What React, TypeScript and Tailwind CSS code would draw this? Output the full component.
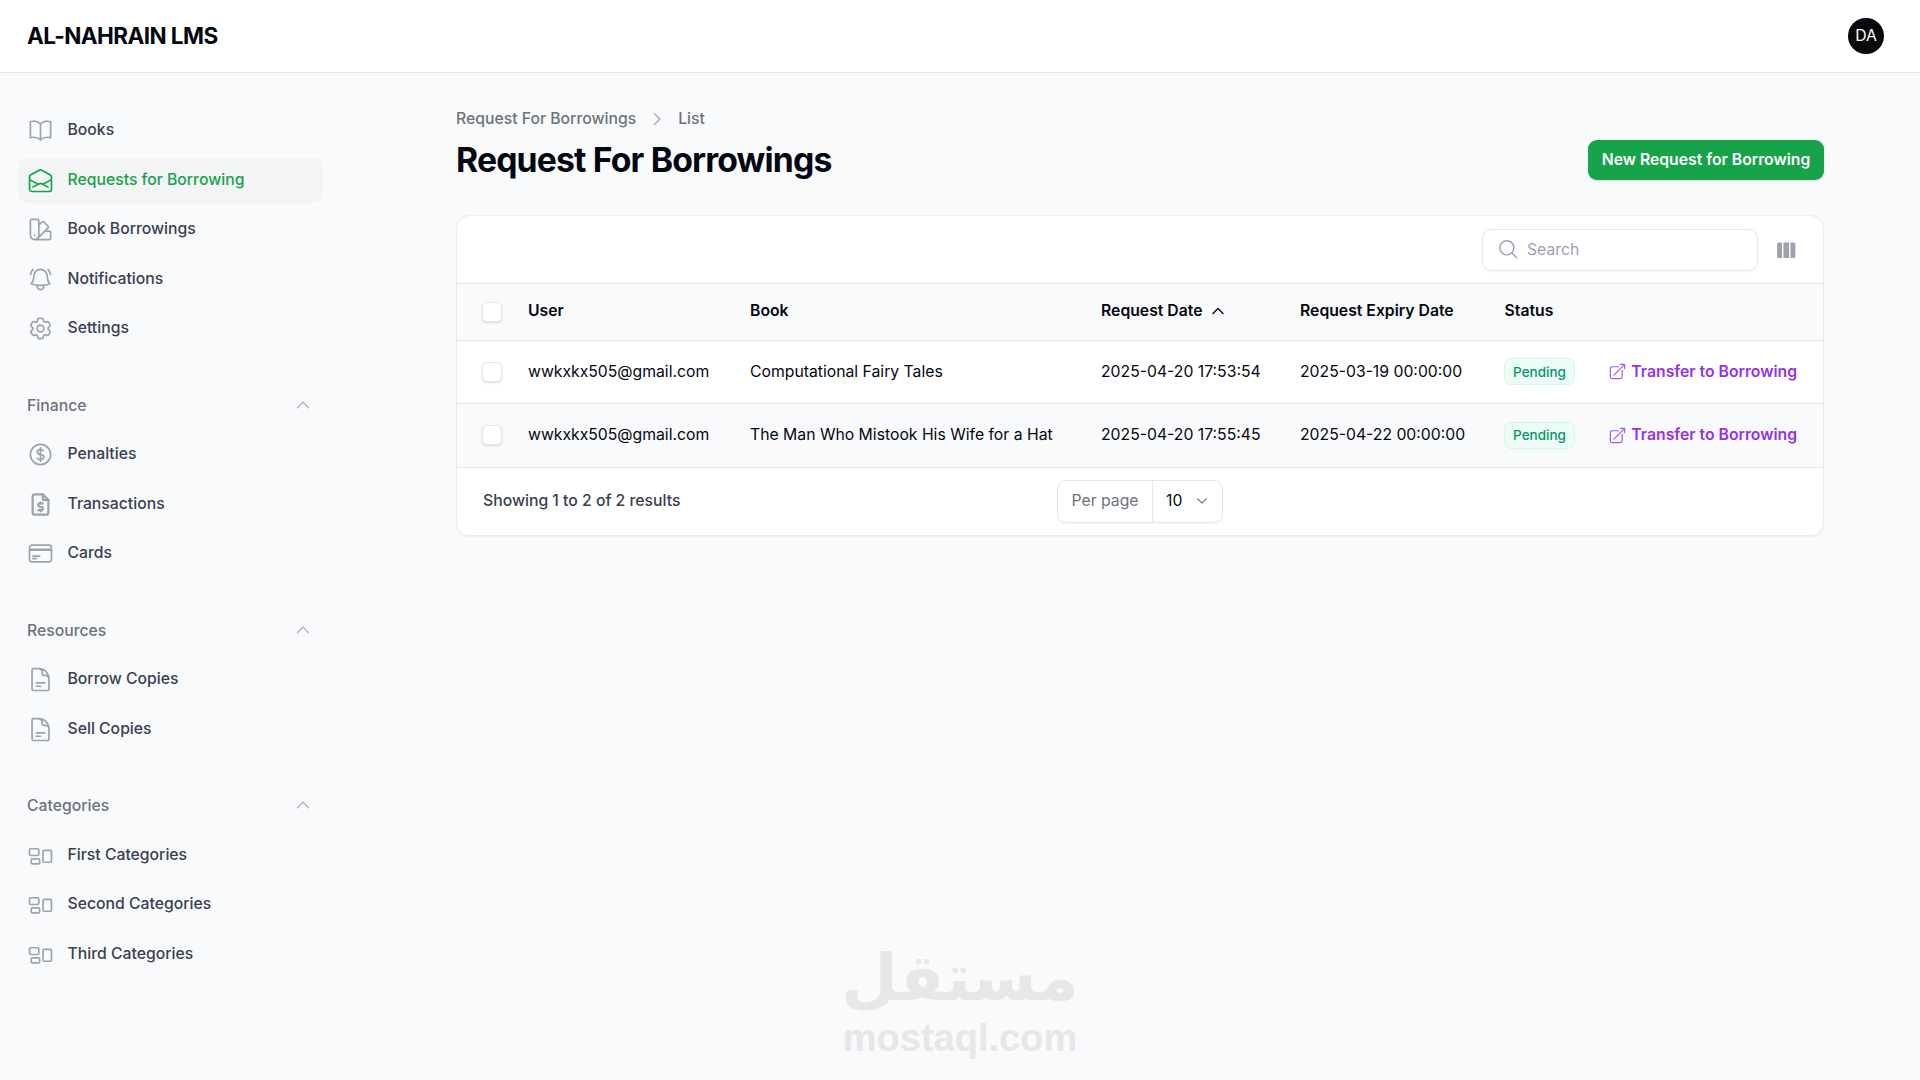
import React from 'react';
import {
    HiOutlineArrowTopRightOnSquare,
    HiOutlineBellAlert,
    HiOutlineBookOpen,
    HiOutlineChevronDown,
    HiOutlineChevronRight,
    HiOutlineChevronUp,
    HiOutlineCog6Tooth,
    HiOutlineCreditCard,
    HiOutlineCurrencyDollar,
    HiOutlineDocumentText,
    HiOutlineEnvelopeOpen,
    HiOutlineMagnifyingGlass,
    HiOutlineRectangleGroup,
    HiOutlineSwatch,
    HiViewColumns,
} from 'react-icons/hi2';
import { TbFileDollar } from 'react-icons/tb';

type NavEntry = { label: string; icon: React.ComponentType<{ className?: string }>; active?: boolean };

const mainNav: NavEntry[] = [
    { label: 'Books', icon: HiOutlineBookOpen },
    { label: 'Requests for Borrowing', icon: HiOutlineEnvelopeOpen, active: true },
    { label: 'Book Borrowings', icon: HiOutlineSwatch },
    { label: 'Notifications', icon: HiOutlineBellAlert },
    { label: 'Settings', icon: HiOutlineCog6Tooth },
];

const groups: { title: string; items: NavEntry[] }[] = [
    {
        title: 'Finance',
        items: [
            { label: 'Penalties', icon: HiOutlineCurrencyDollar },
            { label: 'Transactions', icon: TbFileDollar },
            { label: 'Cards', icon: HiOutlineCreditCard },
        ],
    },
    {
        title: 'Resources',
        items: [
            { label: 'Borrow Copies', icon: HiOutlineDocumentText },
            { label: 'Sell Copies', icon: HiOutlineDocumentText },
        ],
    },
    {
        title: 'Categories',
        items: [
            { label: 'First Categories', icon: HiOutlineRectangleGroup },
            { label: 'Second Categories', icon: HiOutlineRectangleGroup },
            { label: 'Third Categories', icon: HiOutlineRectangleGroup },
        ],
    },
];

const rows = [
    { user: 'wwkxkx505@gmail.com', book: 'Computational Fairy Tales', date: '2025-04-20 17:53:54', expiry: '2025-03-19 00:00:00' },
    { user: 'wwkxkx505@gmail.com', book: 'The Man Who Mistook His Wife for a Hat', date: '2025-04-20 17:55:45', expiry: '2025-04-22 00:00:00', hover: true },
];

const NavItem: React.FC<NavEntry> = ({ label, icon: Icon, active }) => (
    <a className={`flex h-[45px] items-center gap-[13.5px] rounded-[9px] px-[9px] ${active ? 'bg-[#f3f4f6]' : ''}`}>
        <Icon className={`h-[27px] w-[27px] shrink-0 ${active ? 'text-[#16a34a]' : 'text-[#9ca3af]'}`} />
        <span className={`text-[15.75px] leading-[22.5px] font-medium ${active ? 'text-[#16a34a]' : 'text-[#374151]'}`}>{label}</span>
    </a>
);

const Checkbox = () => <span className="block h-[20px] w-[20px] rounded-[5px] border border-[#e5e7eb] bg-white shadow-sm" />;

const App: React.FC = () => {
    return (
        <div className="relative flex min-h-[1080px] flex-col overflow-hidden bg-[#f9fafb] font-['Inter',sans-serif] text-[#030712]">
            <header className="flex h-[73px] items-center justify-between border-b border-[#e5e7eb] bg-white pr-[36px] pl-[27px]">
                <span className="text-[22.5px] leading-[28px] font-bold tracking-tight">AL-NAHRAIN LMS</span>
                <span className="flex h-[36px] w-[36px] items-center justify-center rounded-full bg-[#09090b] text-[15.75px] text-white">DA</span>
            </header>

            <div className="flex flex-1">
                <aside className="w-[360px] shrink-0 pt-[35px] pr-[37px] pl-[18px]">
                    <nav className="flex flex-col gap-[33px]">
                        <div className="flex flex-col gap-[4.5px]">
                            {mainNav.map(item => <NavItem key={item.label} {...item} />)}
                        </div>
                        {groups.map(group => (
                            <div key={group.title} className="flex flex-col gap-[4.5px]">
                                <div className="flex h-[43.5px] items-center justify-between pr-[11px] pl-[9px]">
                                    <span className="text-[15.75px] leading-[22.5px] font-medium text-[#6b7280]">{group.title}</span>
                                    <HiOutlineChevronUp className="mb-[2px] h-[18px] w-[18px] text-[#9ca3af]" />
                                </div>
                                {group.items.map(item => <NavItem key={item.label} {...item} />)}
                            </div>
                        ))}
                    </nav>
                </aside>

                <main className="flex-1 pt-[35px] pr-[96px] pb-[36px] pl-[96px]">
                    <div className="flex items-center justify-between">
                        <div>
                            <div className="flex items-center gap-[9px] text-[15.75px] leading-[22.5px] font-medium text-[#6b7280]">
                                <span>Request For Borrowings</span>
                                <HiOutlineChevronRight className="mx-[3px] h-[18px] w-[18px] text-[#9ca3af]" />
                                <span>List</span>
                            </div>
                            <h1 className="mt-[9px] text-[33.75px] leading-[40.5px] font-bold tracking-tight">Request For Borrowings</h1>
                        </div>
                        <button className="mt-[31px] flex h-[40px] w-[236px] items-center justify-center rounded-[9px] bg-[#16a34a] text-[15.75px] font-semibold text-white shadow-sm">
                            New Request for Borrowing
                        </button>
                    </div>

                    <section className="mt-[35px] overflow-hidden rounded-[13.5px] border border-[#ebecee] bg-white shadow-xs">
                        <div className="flex h-[68px] items-center justify-end gap-[17px] border-b border-[#e5e7eb] pr-[26px]">
                            <div className="flex h-[42px] w-[276px] items-center gap-[8px] rounded-[9px] border border-[#e5e7eb] bg-white pl-[14px] shadow-xs">
                                <HiOutlineMagnifyingGlass className="h-[22.5px] w-[22.5px] text-[#9ca3af]" />
                                <span className="text-[15.75px] text-[#9ca3af]">Search</span>
                            </div>
                            <HiViewColumns className="mt-[1px] h-[22.5px] w-[22.5px] text-[#9ca3af]" />
                        </div>

                        <table className="w-full table-fixed border-collapse text-left text-[15.75px] leading-[22.5px]">
                            <colgroup>
                                <col className="w-[53px]" />
                                <col className="w-[222px]" />
                                <col className="w-[351px]" />
                                <col className="w-[199px]" />
                                <col className="w-[205px]" />
                                <col className="w-[105px]" />
                                <col />
                            </colgroup>
                            <thead>
                                <tr className="h-[56px] border-b border-[#e5e7eb] bg-[#f9fafb] font-semibold">
                                    <th className="pl-[25px]"><Checkbox /></th>
                                    <th className="pb-[1px] pl-[18px] font-semibold">User</th>
                                    <th className="pb-[1px] pl-[18px] font-semibold">Book</th>
                                    <th className="pb-[1px] pl-[18px] font-semibold">
                                        <span className="flex items-center gap-[7px]">Request Date <HiOutlineChevronUp className="h-[16px] w-[16px] stroke-2" /></span>
                                    </th>
                                    <th className="pb-[1px] pl-[18px] font-semibold">Request Expiry Date</th>
                                    <th className="pb-[1px] pl-[17.5px] font-semibold">Status</th>
                                    <th />
                                </tr>
                            </thead>
                            <tbody>
                                {rows.map((row, i) => (
                                    <tr key={i} className={`h-[63.5px] border-b border-[#e5e7eb] ${row.hover ? 'bg-[#f9fafb]' : ''}`}>
                                        <td className="pl-[25px]"><Checkbox /></td>
                                        <td className="pl-[18px]">{row.user}</td>
                                        <td className="whitespace-nowrap pl-[18px]">{row.book}</td>
                                        <td className="whitespace-nowrap pl-[18px]">{row.date}</td>
                                        <td className="whitespace-nowrap pl-[18px]">{row.expiry}</td>
                                        <td className="pl-[17px]">
                                            <span className="inline-flex h-[27px] w-[71px] items-center justify-center rounded-[6.75px] border border-[#d1fae5] bg-[#ecfdf5] text-[13.5px] font-medium text-[#059669]">Pending</span>
                                        </td>
                                        <td className="pr-[26px]">
                                            <a className="flex items-center justify-end gap-[4.5px] font-semibold whitespace-nowrap text-[#9333ea]">
                                                <HiOutlineArrowTopRightOnSquare className="h-[19px] w-[19px] text-[#a855f7]" />
                                                Transfer to Borrowing
                                            </a>
                                        </td>
                                    </tr>
                                ))}
                            </tbody>
                        </table>

                        <div className="grid h-[67px] grid-cols-[1fr_auto_1fr] items-center px-[26px]">
                            <span className="text-[15.75px] font-medium text-[#374151]">Showing 1 to 2 of 2 results</span>
                            <div className="flex h-[43px] w-[166px] items-center rounded-[9px] border border-[#e5e7eb] bg-white text-[15.75px] shadow-xs">
                                <span className="flex h-full w-[95px] items-center justify-center border-r border-[#e5e7eb] text-[#6b7280]">Per page</span>
                                <span className="flex flex-1 items-center justify-between pr-[13px] pl-[13px]">
                                    10
                                    <HiOutlineChevronDown className="h-[14px] w-[14px] stroke-2 text-[#6b7280]" />
                                </span>
                            </div>
                            <span />
                        </div>
                    </section>
                </main>
            </div>

            {/* watermark sits over the page */}
            <div className="pointer-events-none absolute top-[947px] left-[845px] flex w-[230px] flex-col items-center text-[#e5e7e9]">
                <span dir="rtl" className="font-['DejaVu_Sans',sans-serif] text-[65px] leading-[62px] font-bold">مستقل</span>
                <span className="mt-[9px] font-['Liberation_Sans',sans-serif] text-[38px] leading-[40px] font-bold">mostaql.com</span>
            </div>
        </div>
    );
};

export default App;
